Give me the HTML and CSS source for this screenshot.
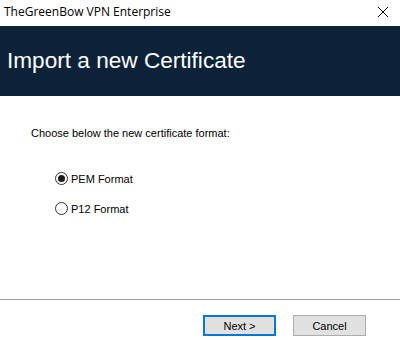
FILE: index.html
```html
<!DOCTYPE html>
<html lang="en">
<head>
    <meta charset="UTF-8">
    <title>TheGreenBow VPN Enterprise</title>
    <link rel="stylesheet" href="styles.css">
</head>
<body>
    <div class="window">
        <div class="titlebar">
            <span class="app-name">TheGreenBow VPN Enterprise</span>
            <svg class="close" width="12" height="12" viewBox="0 0 12 12">
                <path d="M1 1 L11 11 M11 1 L1 11" stroke="#000" stroke-width="1" fill="none"/>
            </svg>
        </div>

        <div class="header">
            <h1>Import a new Certificate</h1>
        </div>

        <div class="content">
            <p class="prompt">Choose below the new certificate format:</p>
            <div class="options">
                <label class="option">
                    <span class="radio checked"></span>
                    <span>PEM Format</span>
                </label>
                <label class="option">
                    <span class="radio"></span>
                    <span>P12 Format</span>
                </label>
            </div>
        </div>

        <div class="footer">
            <button class="btn default">Next &gt;</button>
            <button class="btn">Cancel</button>
        </div>
    </div>
</body>
</html>
```

FILE: styles.css
```css
body {
    margin: 0;
    background: white;
    font-family: "Liberation Sans", Tahoma, sans-serif;
}
.window {
    width: 400px;
    height: 340px;
    display: flex;
    flex-direction: column;
    overflow: hidden;
}
.titlebar {
    height: 26px;
    flex-shrink: 0;
    display: flex;
    align-items: center;
    justify-content: space-between;
    padding: 0 11px 0 4px;
    box-sizing: border-box;
}
.app-name {
    font-family: "Open Sans", "Noto Sans", sans-serif;
    font-size: 12px;
    color: #000;
    margin-top: -4px;
}
.close {
    margin-top: -3px;
}
.header {
    height: 70px;
    flex-shrink: 0;
    background: #0c2238;
    display: flex;
    align-items: center;
    padding-left: 7px;
}
.header h1 {
    margin: 0;
    font-family: "Liberation Sans", Arial, sans-serif;
    font-weight: normal;
    font-size: 22.6px;
    color: #fff;
}
.content {
    flex: 1;
    padding: 31px 0 0 31px;
}
.prompt {
    margin: 0;
    font-size: 11px;
    color: #000;
}
.options {
    display: flex;
    flex-direction: column;
    gap: 17px;
    margin: 33px 0 0 24px;
}
.option {
    display: flex;
    align-items: center;
    gap: 3px;
    font-size: 11px;
    color: #000;
}
.radio {
    width: 11px;
    height: 11px;
    border: 1px solid #333;
    border-radius: 50%;
    background: #fff;
    position: relative;
}
.radio.checked::after {
    content: "";
    position: absolute;
    left: 2px;
    top: 2px;
    width: 7px;
    height: 7px;
    border-radius: 50%;
    background: #1a1a1a;
}
.footer {
    height: 41px;
    flex-shrink: 0;
    box-sizing: border-box;
    border-top: 1px solid #a0a0a0;
    display: flex;
    justify-content: flex-end;
    align-items: flex-start;
    gap: 17px;
    padding: 15px 34px 0 0;
}
.btn {
    width: 73px;
    height: 21px;
    background: #e1e1e1;
    border: 1px solid #adadad;
    font-family: "Liberation Sans", Tahoma, sans-serif;
    font-size: 11px;
    color: #000;
    padding: 0;
}
.btn.default {
    border: 2px solid #0078d7;
}
```
